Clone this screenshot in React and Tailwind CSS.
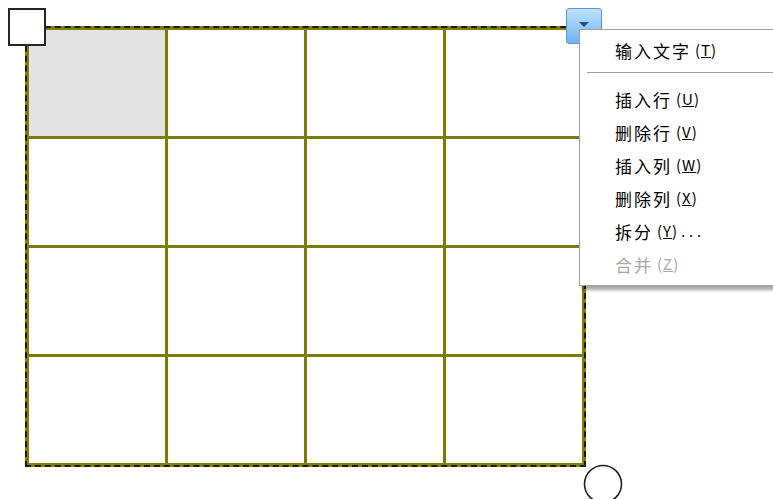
import React from 'react';

const cells = Array.from({ length: 16 }, (_, i) => i);

const menuItems = [
  { label: '插入行', key: 'U' },
  { label: '删除行', key: 'V' },
  { label: '插入列', key: 'W' },
  { label: '删除列', key: 'X' },
  { label: '拆分', key: 'Y', dots: true },
  { label: '合并', key: 'Z', disabled: true },
];

function MenuItem({ label, hotkey, dots, disabled }) {
  return (
    <div className={`h-[33px] flex items-center pl-[35px] text-[17px] ${disabled ? 'text-[#a8a8a0]' : 'text-black'}`}>
      <span className="tracking-[2px]">{label}</span>
      <span className="ml-[4px] text-[15px] tracking-[1px]">
        (<u>{hotkey}</u>)
      </span>
      {dots && <span className="ml-[3px] tracking-[4px] text-[14px]">...</span>}
    </div>
  );
}

export default function App() {
  return (
    <div
      className="relative w-[773px] h-[499px] bg-white overflow-hidden"
      style={{ fontFamily: '"Noto Sans CJK SC", "Liberation Sans", sans-serif' }}
    >
      {/* table */}
      <div className="ml-[25px] mt-[26px] w-[561px] h-[441px] border-4 border-[#808000] outline-2 outline-dashed outline-[#1a1a1a] outline-offset-[-2px]">
        <div className="grid grid-cols-4 grid-rows-4 gap-[3px] bg-[#7c7c00] w-full h-full">
          {cells.map((i) => (
            <div key={i} className={i === 0 ? 'bg-[#e3e3e3]' : 'bg-white'} />
          ))}
        </div>
      </div>

      {/* top-left move handle */}
      <div className="absolute left-[8px] top-[8px] w-[38px] h-[38px] bg-white border-2 border-[#262626]" />

      {/* bottom-right resize handle */}
      <svg className="absolute left-[583px] top-[464px]" width="40" height="40" viewBox="0 0 40 40">
        <circle cx="20" cy="20" r="18.5" fill="white" stroke="#222" strokeWidth="1.6" />
      </svg>

      {/* dropdown button */}
      <div className="absolute left-[566px] top-[8px] w-[36px] h-[36px] rounded-[3px] border border-[#4f9be6] bg-gradient-to-b from-[#bfe2fd] to-[#6cb4f3] flex justify-center">
        <svg className="mt-[13px]" width="10" height="5" viewBox="0 0 10 5">
          <polygon points="0,0 10,0 5,5" fill="#1f4f86" />
        </svg>
      </div>

      {/* context menu */}
      <div className="absolute left-[579px] top-[29px] w-[200px] h-[257px] bg-white border border-[#a0a09a] shadow-[3px_4px_3px_rgba(0,0,0,0.35)] pt-[4px]">
        <div className="h-[33px] flex items-center pl-[35px] text-[17px] text-black">
          <span className="tracking-[2px]">输入文字</span>
          <span className="ml-[4px] text-[15px] tracking-[1px]">
            (<u>T</u>)
          </span>
        </div>
        <div className="mt-[5px] ml-[7px] h-[2px] border-t border-[#a0a0a0] border-b border-b-white" />
        <div className="mt-[9px]">
          {menuItems.map((m) => (
            <MenuItem key={m.key} label={m.label} hotkey={m.key} dots={m.dots} disabled={m.disabled} />
          ))}
        </div>
      </div>
    </div>
  );
}
